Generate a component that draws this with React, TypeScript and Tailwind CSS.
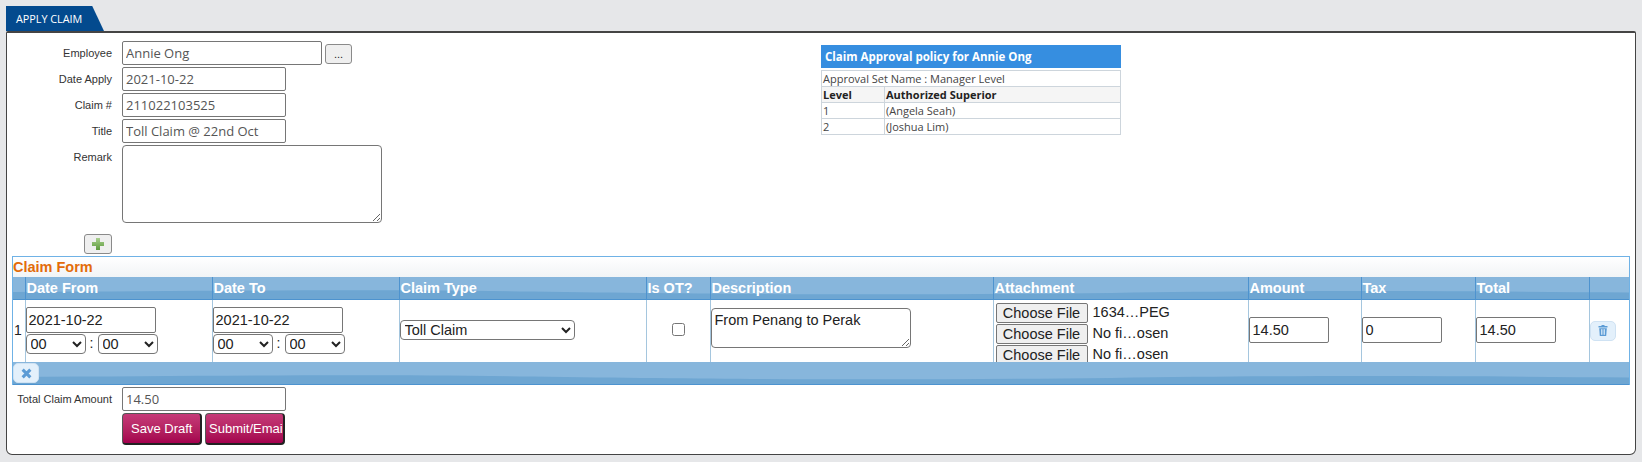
const inputCls = "block border border-[#767676] rounded-[2px] bg-white text-[#555] px-[3px] text-[13px] outline-none";
const open = "font-['Open_Sans',sans-serif]";
const arial = "font-['Liberation_Sans',Arial,sans-serif]";

function Wave() {
  return (
    <svg className="absolute inset-0 w-full h-full" viewBox="0 0 1618 22" preserveAspectRatio="none" aria-hidden="true">
      <rect width="1618" height="22" fill="#87b6dc" />
      <path d="M0 15 C200 14 340 12 520 14.5 C760 18 900 18 1100 16 C1300 13 1450 14 1618 15.5 L1618 22 L0 22 Z" fill="#6ea6d2" />
    </svg>
  );
}

function FormRow({ label, value, w = "w-[164px]", children }: { label: string; value: string; w?: string; children?: React.ReactNode }) {
  return (
    <div className="flex items-start h-[26px]">
      <label className={`${arial} w-[100px] mr-[10px] text-right text-[11px] leading-[24px] text-[#333]`}>{label}</label>
      <input readOnly value={value} className={`${inputCls} ${open} ${w} h-[24px]`} />
      {children}
    </div>
  );
}

function FileRow({ name }: { name: string }) {
  return (
    <div className={`${arial} flex items-center h-[21px] text-[14.5px] text-[#222]`}>
      <button className="w-[92px] h-[20px] shrink-0 border border-[#767676] rounded-[2px] bg-[#efefef] text-center leading-[18px]">Choose File</button>
      <span className="ml-[5px] whitespace-nowrap">{name}</span>
    </div>
  );
}

function TimeSelects() {
  return (
    <div className="flex items-center h-[21px]">
      <select className={`${arial} w-[60px] h-[20px] border border-[#767676] rounded-[4px] bg-white text-[14.5px] text-[#222]`}><option>00</option></select>
      <span className="w-[12px] text-center text-[14px] text-[#222]">:</span>
      <select className={`${arial} w-[60px] h-[20px] border border-[#767676] rounded-[4px] bg-white text-[14.5px] text-[#222]`}><option>00</option></select>
    </div>
  );
}

function DateCell() {
  return (
    <div>
      <input readOnly value="2021-10-22" className={`${arial} block w-[130px] h-[26px] border border-[#767676] rounded-[2px] px-[2px] text-[14.5px] text-[#222] outline-none`} />
      <TimeSelects />
    </div>
  );
}

function AmountInput({ value }: { value: string }) {
  return <input readOnly value={value} className={`${arial} block mb-[2px] w-[80px] h-[26px] border border-[#767676] rounded-[2px] px-[3px] text-[14.5px] text-[#222] outline-none`} />;
}

const th = "relative p-0 border-b border-l border-[#4d93cf] text-left align-middle pl-[1px] text-[14.5px] font-bold text-white leading-[20px]";
const td = "border-l border-[#a5c6de] align-middle p-0 h-[63px]";
const saveBtn = `${arial} block w-[80px] h-[32px] overflow-hidden whitespace-nowrap rounded-[4px] border border-[#555] border-r-2 border-b-2 border-r-[#222] border-b-[#222] bg-gradient-to-b from-[#c63a78] to-[#a4004e] text-white text-[13px] text-left`;

export default function App() {
  return (
    <div className="w-[1642px] h-[462px] bg-[#e6e7e9] overflow-hidden pt-[6px] pl-[6px]">
      <div className={`${open} w-[98px] h-[25px] bg-[#034a8e] text-white text-[10.8px] leading-[25px] pl-[10px] [clip-path:polygon(0_0,88%_0,100%_100%,0_100%)]`}>
        APPLY CLAIM
      </div>
      <div className="w-[1630px] h-[424px] bg-white border border-[#444] border-t-2 rounded-b-[6px] rounded-t-[2px] pl-[5px] pr-[5px]">
        <div className="flex items-start h-[201px] pt-[8px]">
          <div className="w-[809px] shrink-0">
            <FormRow label="Employee" value="Annie Ong" w="w-[200px]">
              <button className={`${arial} ml-[3px] mt-[3px] w-[27px] h-[20px] border border-[#8a8a8a] rounded-[3px] bg-[#efefef] text-[11px] leading-[14px] text-[#222]`}>...</button>
            </FormRow>
            <FormRow label="Date Apply" value="2021-10-22" />
            <FormRow label="Claim #" value="211022103525" />
            <FormRow label="Title" value="Toll Claim @ 22nd Oct" />
            <div className="flex items-start">
              <label className={`${arial} w-[100px] mr-[10px] text-right text-[11px] leading-[24px] text-[#333]`}>Remark</label>
              <textarea readOnly className="block w-[260px] h-[78px] border border-[#767676] rounded-[4px] bg-white outline-none" />
            </div>
          </div>
          <div className={`${open} w-[300px] mt-[4px] text-[11px] text-[#444]`}>
            <div className="h-[23px] bg-[#368ee0] text-white font-bold text-[11.5px] leading-[23px] pl-[4px]">Claim Approval policy for Annie Ong</div>
            <table className="mt-[2px] w-full table-fixed border-collapse leading-[15px]">
              <colgroup>
                <col className="w-[63px]" />
                <col />
              </colgroup>
              <tbody>
                <tr>
                  <td colSpan={2} className="border border-[#cdd5dc] h-[16px] pl-[1px] p-0">Approval Set Name : Manager Level</td>
                </tr>
                <tr className="bg-[#f5f5f5] font-bold text-[#222]">
                  <td className="border border-[#cdd5dc] h-[16px] pl-[1px] p-0">Level</td>
                  <td className="border border-[#cdd5dc] h-[16px] pl-[1px] p-0">Authorized Superior</td>
                </tr>
                <tr>
                  <td className="border border-[#cdd5dc] h-[16px] pl-[1px] p-0">1</td>
                  <td className="border border-[#cdd5dc] h-[16px] pl-[1px] p-0">(Angela Seah)</td>
                </tr>
                <tr>
                  <td className="border border-[#cdd5dc] h-[16px] pl-[1px] p-0">2</td>
                  <td className="border border-[#cdd5dc] h-[16px] pl-[1px] p-0">(Joshua Lim)</td>
                </tr>
              </tbody>
            </table>
          </div>
        </div>

        <div className="pl-[72px] h-[22px]">
          <button className="flex items-center justify-center w-[28px] h-[20px] border border-[#8a8a8a] rounded-[3px] bg-[#efefef]">
            <svg width="14" height="14" viewBox="0 0 14 14" aria-hidden="true">
              <defs>
                <linearGradient id="plusg" x1="0" y1="0" x2="0" y2="1">
                  <stop offset="0" stopColor="#a9cf8e" />
                  <stop offset="1" stopColor="#5d9a3c" />
                </linearGradient>
              </defs>
              <path d="M5 1h4v4h4v4H9v4H5V9H1V5h4z" fill="url(#plusg)" />
            </svg>
          </button>
        </div>

        <div className={`${arial} w-[1618px] border border-[#6fb2e6] border-b-0`}>
          <div className="h-[20px] bg-gradient-to-b from-white to-[#f1f4f6] text-[14.5px] leading-[20px] font-bold text-[#e36c0a]">Claim Form</div>
          <div className="relative">
            <div className="absolute top-0 left-0 right-0 h-[22px]"><Wave /></div>
            <table className="relative w-full table-fixed border-collapse">
              <colgroup>
                <col className="w-[12px]" />
                <col className="w-[187px]" />
                <col className="w-[187px]" />
                <col className="w-[247px]" />
                <col className="w-[64px]" />
                <col className="w-[283px]" />
                <col className="w-[255px]" />
                <col className="w-[113px]" />
                <col className="w-[114px]" />
                <col className="w-[114px]" />
                <col />
              </colgroup>
              <thead>
                <tr className="h-[22px]">
                  <th className="p-0 border-b border-[#4d93cf]"></th>
                  <th className={th}>Date From</th>
                  <th className={th}>Date To</th>
                  <th className={th}>Claim Type</th>
                  <th className={th}>Is OT?</th>
                  <th className={th}>Description</th>
                  <th className={th}>Attachment</th>
                  <th className={th}>Amount</th>
                  <th className={th}>Tax</th>
                  <th className={th}>Total</th>
                  <th className={th}></th>
                </tr>
              </thead>
              <tbody>
                <tr>
                  <td className="align-middle p-0 pl-[1px] h-[63px] text-[14px] text-[#222] text-left">1</td>
                  <td className={td}><DateCell /></td>
                  <td className={td}><DateCell /></td>
                  <td className={td}>
                    <select className="block mb-[2px] w-[175px] h-[20px] border border-[#767676] rounded-[4px] bg-white text-[14.5px] text-[#222]"><option>Toll Claim</option></select>
                  </td>
                  <td className={td + " text-center"}>
                    <input type="checkbox" className="inline-block w-[13px] h-[13px] align-middle mb-[4px]" />
                  </td>
                  <td className={td}>
                    <textarea readOnly value="From Penang to Perak" className="block mb-[6px] w-[200px] h-[40px] border border-[#767676] rounded-[4px] px-[3px] py-[1px] text-[14.5px] text-[#222] outline-none" />
                  </td>
                  <td className={td}>
                    <div className="h-[62px] overflow-hidden pl-[2px] pt-[3px]">
                      <FileRow name="1634…PEG" />
                      <FileRow name="No fi…osen" />
                      <FileRow name="No fi…osen" />
                    </div>
                  </td>
                  <td className={td}><AmountInput value="14.50" /></td>
                  <td className={td}><AmountInput value="0" /></td>
                  <td className={td}><AmountInput value="14.50" /></td>
                  <td className={td}>
                    <button className="flex items-center justify-center w-[26px] h-[20px] rounded-[5px] border border-[#cfe2f3] bg-[#e3f0fb]">
                      <svg width="10" height="11" viewBox="0 0 10 11" aria-hidden="true" fill="#5b9bd5">
                        <rect x="3.5" y="0" width="3" height="1" />
                        <rect x="0.5" y="1" width="9" height="1.5" />
                        <path d="M1.2 3.2h7.6L8.2 11H1.8z" />
                        <rect x="3" y="4.2" width="0.8" height="5.6" fill="#e3f0fb" />
                        <rect x="4.6" y="4.2" width="0.8" height="5.6" fill="#e3f0fb" />
                        <rect x="6.2" y="4.2" width="0.8" height="5.6" fill="#e3f0fb" />
                      </svg>
                    </button>
                  </td>
                </tr>
              </tbody>
            </table>
          </div>
          <div className="relative h-[23px] border-b border-[#4d93cf] flex items-center">
            <Wave />
            <button className="relative flex items-center justify-center w-[26px] h-[20px] rounded-[5px] border border-[#cfe2f3] bg-[#e3f0fb]">
              <svg width="11" height="11" viewBox="0 0 10 10" aria-hidden="true">
                <path d="M1.5 1.5l7 7M8.5 1.5l-7 7" stroke="#5b9bd5" strokeWidth="2.8" />
              </svg>
            </button>
          </div>
        </div>

        <div className="flex items-start mt-[2px]">
          <label className={`${arial} w-[100px] mr-[10px] text-right text-[11px] leading-[24px] text-[#333]`}>Total Claim Amount</label>
          <input readOnly value="14.50" className={`${inputCls} ${open} w-[164px] h-[24px]`} />
        </div>
        <div className="flex gap-[3px] pl-[110px] mt-[2px]">
          <button className={`${saveBtn} pl-[8px]`}>Save Draft</button>
          <button className={`${saveBtn} pl-[3px]`}>Submit/Email</button>
        </div>
      </div>
    </div>
  );
}
